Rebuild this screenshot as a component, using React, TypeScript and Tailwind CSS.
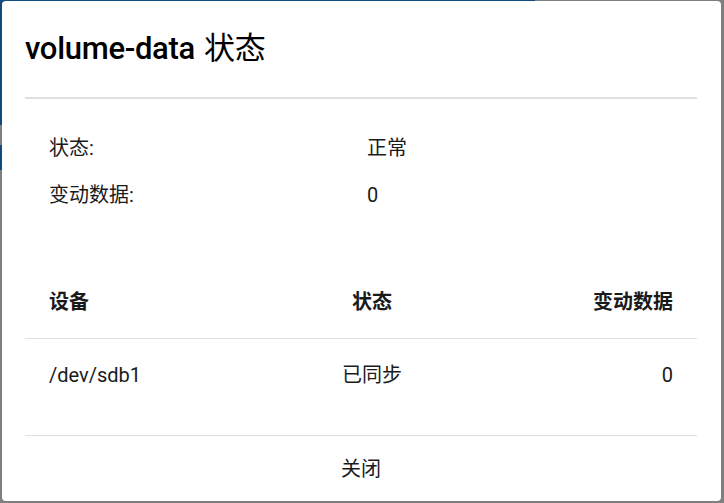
import React from "react";

const font = { fontFamily: "Roboto, 'Noto Sans CJK SC', sans-serif" };

export default function App() {
  return (
    <div
      className="relative w-[724px] h-[503px] overflow-hidden bg-[#7f7f7f] pt-[1px] pl-[2px]"
      style={font}
    >
      {/* page behind the overlay */}
      <div className="absolute left-0 top-0 w-[535px] h-[2px] bg-[#114a80]" />
      <div className="absolute left-0 top-0 w-[2px] h-[125px] bg-[#114a80]" />
      <div className="absolute left-0 top-[145px] w-[2px] h-[25px] bg-[#114a80]" />

      <div className="relative flex flex-col w-[719px] h-[500px] bg-white rounded-[4px] text-[#1a1a1a]">
        <div className="h-[96px] flex items-center pl-[23px] text-[31px] font-medium text-black tracking-[-0.3px]">
          volume-data <span className="ml-[9px] font-normal">状态</span>
        </div>
        <div className="mx-[23px] mr-[24px] h-[2px] bg-[#e0e0e0]" />

        <div className="mx-[23px] mr-[24px] pt-[25px] text-[20px]">
          <div className="h-[47px] grid grid-cols-[318px_1fr] items-center px-6">
            <span>状态:</span>
            <span>正常</span>
          </div>
          <div className="h-[47px] grid grid-cols-[318px_1fr] items-center px-6">
            <span>变动数据:</span>
            <span>0</span>
          </div>
        </div>

        <div className="mx-[23px] mr-[24px] mt-[48px] text-[20px]">
          <div className="h-[73px] grid grid-cols-[290px_114px_1fr] items-center border-b border-[#e0e0e0] font-bold">
            <span className="px-6">设备</span>
            <span className="text-center">状态</span>
            <span className="px-6 text-right">变动数据</span>
          </div>
          <div className="h-[72px] grid grid-cols-[290px_114px_1fr] items-center">
            <span className="px-6">/dev/sdb1</span>
            <span className="text-center">已同步</span>
            <span className="px-6 text-right">0</span>
          </div>
        </div>

        <div className="mx-[23px] mr-[24px] mt-[24px] flex-1 flex items-center justify-center border-t border-[#e0e0e0]">
          <button className="px-4 py-1 text-[20px] text-[#1a1a1a]">关闭</button>
        </div>
      </div>
    </div>
  );
}
